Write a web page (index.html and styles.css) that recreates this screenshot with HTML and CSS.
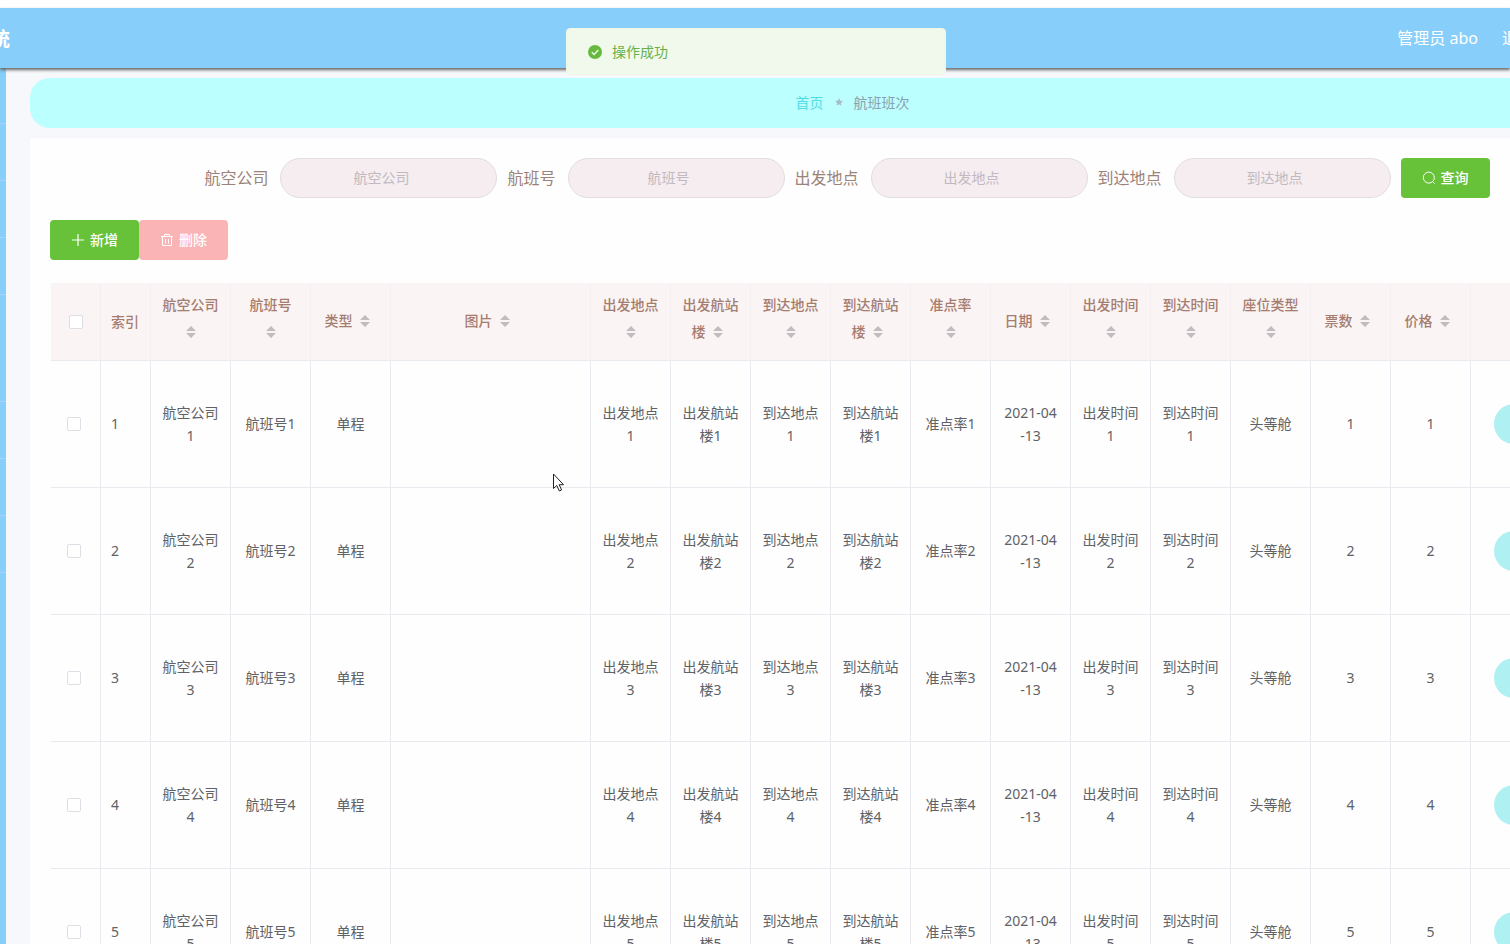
FILE: index.html
```html
<!DOCTYPE html>
<html lang="zh-CN">
<head>
<meta charset="utf-8">
<title>航班班次</title>
<link rel="stylesheet" href="styles.css">
</head>
<body>
<svg class="defs" aria-hidden="true">
  <symbol id="sort" viewBox="0 0 10 12"><path d="M5 0l5 5H0zM0 7h10l-5 5z" fill="#c0bcbf"/></symbol>
</svg>
<header class="topbar">
  <h1 class="brand"><span>航班管理系统</span></h1>
  <div class="account"><span>管理员 abo</span><a href="#">退出登录</a></div>
</header>
<div class="layout">
  <nav class="sidebar"><ul><li></li><li></li><li></li><li></li><li class="tall"></li><li></li><li></li><li></li></ul></nav>
  <main class="main">
    <div class="crumbs">
      <a href="#">首页</a>
      <svg width="8" height="8" viewBox="0 0 10 10"><path d="M5 0l1.5 3.3 3.5.4-2.6 2.4.7 3.6L5 7.9 1.9 9.7l.7-3.6L0 3.7l3.5-.4z" fill="#a9bcc8"/></svg>
      <span>航班班次</span>
    </div>
    <section class="panel">
      <form class="search">
        <label for="company">航空公司</label><input id="company" type="text" placeholder="航空公司">
        <label for="flight">航班号</label><input id="flight" type="text" placeholder="航班号">
        <label for="from">出发地点</label><input id="from" type="text" placeholder="出发地点">
        <label for="to">到达地点</label><input id="to" type="text" placeholder="到达地点">
        <button class="btn" type="button"><svg width="14" height="14" viewBox="0 0 14 14" fill="none" stroke="currentColor"><circle cx="6.8" cy="6.6" r="5.5"/><path d="M10.6 10.6l2 2"/></svg>查询</button>
      </form>
      <div class="tools">
        <button class="btn" type="button"><svg width="14" height="14" viewBox="0 0 14 14" fill="none" stroke="currentColor" stroke-width="1.2"><path d="M7 1v12M1 7h12"/></svg>新增</button>
        <button class="btn danger" type="button" disabled><svg width="14" height="14" viewBox="0 0 14 14" fill="none" stroke="currentColor"><path d="M1 3.5h12M4.5 3.5v-2h5v2M2.5 3.5v9h9v-9M5.5 6v4.500M8.500 6v4.500"/></svg>删除</button>
      </div>
      <table class="grid">
        <colgroup><col class="c50"><col class="c50"><col class="c80"><col class="c80"><col class="c80"><col class="c200"><col class="c80" span="11"><col></colgroup>
        <thead>
          <tr>
            <th><input type="checkbox" aria-label="全选"></th>
            <th class="idx">索引</th>
            <th>航空公司<i class="sort"><svg><use href="#sort"/></svg></i></th>
            <th>航班号<i class="sort"><svg><use href="#sort"/></svg></i></th>
            <th>类型<i class="sort"><svg><use href="#sort"/></svg></i></th>
            <th>图片<i class="sort"><svg><use href="#sort"/></svg></i></th>
            <th>出发地点<i class="sort"><svg><use href="#sort"/></svg></i></th>
            <th>出发航站楼<i class="sort"><svg><use href="#sort"/></svg></i></th>
            <th>到达地点<i class="sort"><svg><use href="#sort"/></svg></i></th>
            <th>到达航站楼<i class="sort"><svg><use href="#sort"/></svg></i></th>
            <th>准点率<i class="sort"><svg><use href="#sort"/></svg></i></th>
            <th>日期<i class="sort"><svg><use href="#sort"/></svg></i></th>
            <th>出发时间<i class="sort"><svg><use href="#sort"/></svg></i></th>
            <th>到达时间<i class="sort"><svg><use href="#sort"/></svg></i></th>
            <th>座位类型<i class="sort"><svg><use href="#sort"/></svg></i></th>
            <th>票数<i class="sort"><svg><use href="#sort"/></svg></i></th>
            <th>价格<i class="sort"><svg><use href="#sort"/></svg></i></th>
            <th></th>
          </tr>
        </thead>
        <tbody>
          <tr><td class="pick"><input type="checkbox" aria-label="选择第1行"></td><td class="idx">1</td><td>航空公司1</td><td>航班号1</td><td>单程</td><td></td><td>出发地点1</td><td>出发航站楼1</td><td>到达地点1</td><td>到达航站楼1</td><td>准点率1</td><td>2021-04<br>-13</td><td>出发时间1</td><td>到达时间1</td><td>头等舱</td><td>1</td><td>1</td><td class="ops"><button class="pill" type="button">详情</button></td></tr>
          <tr><td class="pick"><input type="checkbox" aria-label="选择第2行"></td><td class="idx">2</td><td>航空公司2</td><td>航班号2</td><td>单程</td><td></td><td>出发地点2</td><td>出发航站楼2</td><td>到达地点2</td><td>到达航站楼2</td><td>准点率2</td><td>2021-04<br>-13</td><td>出发时间2</td><td>到达时间2</td><td>头等舱</td><td>2</td><td>2</td><td class="ops"><button class="pill" type="button">详情</button></td></tr>
          <tr><td class="pick"><input type="checkbox" aria-label="选择第3行"></td><td class="idx">3</td><td>航空公司3</td><td>航班号3</td><td>单程</td><td></td><td>出发地点3</td><td>出发航站楼3</td><td>到达地点3</td><td>到达航站楼3</td><td>准点率3</td><td>2021-04<br>-13</td><td>出发时间3</td><td>到达时间3</td><td>头等舱</td><td>3</td><td>3</td><td class="ops"><button class="pill" type="button">详情</button></td></tr>
          <tr><td class="pick"><input type="checkbox" aria-label="选择第4行"></td><td class="idx">4</td><td>航空公司4</td><td>航班号4</td><td>单程</td><td></td><td>出发地点4</td><td>出发航站楼4</td><td>到达地点4</td><td>到达航站楼4</td><td>准点率4</td><td>2021-04<br>-13</td><td>出发时间4</td><td>到达时间4</td><td>头等舱</td><td>4</td><td>4</td><td class="ops"><button class="pill" type="button">详情</button></td></tr>
          <tr><td class="pick"><input type="checkbox" aria-label="选择第5行"></td><td class="idx">5</td><td>航空公司5</td><td>航班号5</td><td>单程</td><td></td><td>出发地点5</td><td>出发航站楼5</td><td>到达地点5</td><td>到达航站楼5</td><td>准点率5</td><td>2021-04<br>-13</td><td>出发时间5</td><td>到达时间5</td><td>头等舱</td><td>5</td><td>5</td><td class="ops"><button class="pill" type="button">详情</button></td></tr>
        </tbody>
      </table>
    </section>
  </main>
</div>
<div class="toast" role="status">
  <svg width="16" height="16" viewBox="0 0 16 16"><circle cx="8" cy="8" r="7" fill="#67b83e"/><path d="M4.800 8.200l2.300 2.200 4.200-4.400" fill="none" stroke="#f0f9eb" stroke-width="1.400"/></svg>
  操作成功
</div>
<svg class="pointer" width="14" height="21" viewBox="0 0 14 21" aria-hidden="true"><path d="M1.500 2v14.500l3.300-3 2.500 5.500 2.300-1-2.400-5.300h4.300z" fill="#fff" stroke="#222"/></svg>
</body>
</html>
```
FILE: styles.css
```css
* { box-sizing: border-box; }
body {
  margin: 0;
  padding-top: 8px;
  height: 100vh;
  overflow: hidden;
  display: flex;
  flex-direction: column;
  background: #fefefe;
  color: #606266;
  font: 14px/23px "Noto Sans", "Noto Sans CJK SC", sans-serif;
}
a { text-decoration: none; color: inherit; }
button, input { font: inherit; }
.defs { position: absolute; width: 0; height: 0; }

.topbar {
  position: relative;
  z-index: 1;
  flex: none;
  height: 60px;
  display: flex;
  justify-content: space-between;
  align-items: center;
  background: #87cefa;
  box-shadow: 0 2px 3px #666;
  color: #fff;
}
.brand {
  margin: 0;
  padding-top: 2px;
  width: 10px;
  display: flex;
  justify-content: flex-end;
  font-size: 20px;
  white-space: nowrap;
}
.account {
  display: flex;
  gap: 24px;
  margin-right: -56px;
  font-size: 16px;
  white-space: nowrap;
}

.layout { flex: 1; min-height: 0; display: flex; background: #f7f8fc; }
.sidebar { flex: none; width: 6px; background: #87cefa; }
.sidebar ul { margin: 0; padding: 0; list-style: none; }
.sidebar li { height: 57px; border-bottom: 1px solid #a5d6f5; }
.sidebar li:first-child { height: 56px; }
.sidebar .tall { height: 107px; }

.main {
  flex: 1;
  min-width: 0;
  display: flex;
  flex-direction: column;
  gap: 10px;
  padding: 10px 0 0 24px;
  margin-right: -165px;
}
.crumbs {
  flex: none;
  height: 50px;
  padding-bottom: 2px;
  display: flex;
  align-items: center;
  justify-content: center;
  gap: 11px;
  border-radius: 20px;
  background: #bbffff;
  color: #8aa0b0;
}
.crumbs a { color: #55dbe5; }

.panel { flex: 1; padding: 20px; background: #fefefe; }
.search { display: flex; align-items: center; justify-content: center; }
.search label { padding-right: 12px; font-size: 16px; color: #9b8379; }
.search input {
  width: 217px;
  height: 40px;
  margin-right: 10px;
  padding: 0 30px 2px 15px;
  border: 1px solid #e2dde2;
  border-radius: 20px;
  background: #f5edf0;
  text-align: center;
}
.search input::placeholder { color: #c2b9c0; }
.search .btn { margin-right: 11px; }
.btn {
  height: 40px;
  padding: 0 21px 1px;
  display: flex;
  align-items: center;
  gap: 5px;
  border: 0;
  border-radius: 4px;
  background: #67c23a;
  color: #fff;
  font-weight: 500;
}
.danger { background: #fbb4b6; }
.tools { display: flex; margin: 22px 0 23px; }

.grid {
  width: calc(100% - 1px);
  margin-left: 1px;
  table-layout: fixed;
  border-collapse: separate;
  border-spacing: 0;
  text-align: center;
}
.c50 { width: 50px; }
.c80 { width: 80px; }
.c200 { width: 200px; }
.grid th, .grid td {
  padding: 0 10px;
  border: solid #ebe9ef;
  border-width: 0 1px 1px 0;
  vertical-align: middle;
  word-break: break-all;
}
.grid th { height: 78px; background: #faf4f4; border-right-color: #f3eef2; color: #a67c6f; font-weight: 500; }
.grid td { height: 127px; padding-bottom: 1px; }
.grid .idx { text-align: left; }
.grid .pick { padding-right: 14px; }
.grid th:first-child, .grid .pick { line-height: 14px; }
.grid input {
  appearance: none;
  display: block;
  width: 14px;
  height: 14px;
  margin: 0 auto;
  border: 1px solid #dcdfe6;
  border-radius: 2px;
  background: #fff;
}
.sort {
  display: inline-flex;
  width: 24px;
  height: 34px;
  padding-bottom: 2px;
  align-items: center;
  justify-content: center;
  vertical-align: middle;
}
.sort svg { width: 10px; height: 12px; }
.grid .ops { padding: 0 0 0 23px; text-align: left; }
.pill {
  height: 40px;
  padding: 0 30px;
  border: 0;
  border-radius: 20px;
  background: #aff1f3;
  color: #fff;
}

.toast {
  position: fixed;
  z-index: 2;
  top: 28px;
  left: 50%;
  width: 380px;
  margin-left: -189px;
  padding: 11px 20px;
  display: flex;
  align-items: center;
  gap: 9px;
  border: 1px solid #eef6e6;
  border-radius: 4px;
  background: #f0f9eb;
  color: #67b04a;
}
.pointer { position: fixed; z-index: 3; left: 552px; top: 472px; }
```
